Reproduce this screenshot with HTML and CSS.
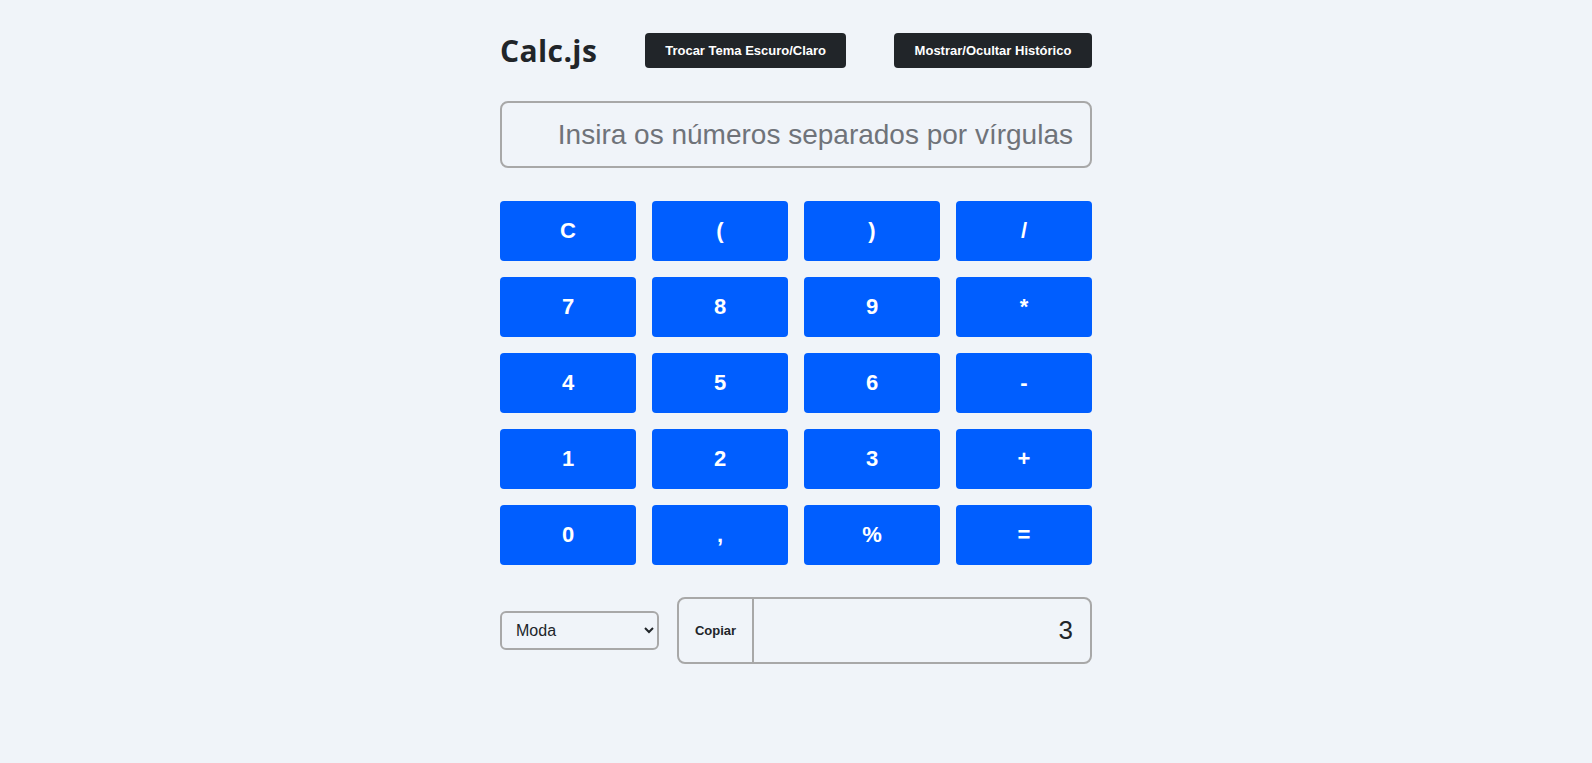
FILE: index.html
```html
<!DOCTYPE html>
<html lang="pt-BR">
<head>
<meta charset="utf-8">
<title>Calc.js</title>
<link rel="stylesheet" href="styles.css">
</head>
<body>
<main class="calc">
  <header class="header">
    <h1 class="title">Calc.js</h1>
    <button class="btn-dark">Trocar Tema Escuro/Claro</button>
    <button class="btn-dark">Mostrar/Ocultar Histórico</button>
  </header>
  <input class="entry" type="text" placeholder="Insira os números separados por vírgulas">
  <div class="keys">
    <button class="key">C</button>
    <button class="key">(</button>
    <button class="key">)</button>
    <button class="key">/</button>
    <button class="key">7</button>
    <button class="key">8</button>
    <button class="key">9</button>
    <button class="key">*</button>
    <button class="key">4</button>
    <button class="key">5</button>
    <button class="key">6</button>
    <button class="key">-</button>
    <button class="key">1</button>
    <button class="key">2</button>
    <button class="key">3</button>
    <button class="key">+</button>
    <button class="key">0</button>
    <button class="key">,</button>
    <button class="key">%</button>
    <button class="key">=</button>
  </div>
  <div class="bottom">
    <select class="mode">
      <option>Moda</option>
      <option>Média</option>
      <option>Mediana</option>
    </select>
    <div class="output">
      <button class="copy">Copiar</button>
      <div class="result">3</div>
    </div>
  </div>
</main>
</body>
</html>
```

FILE: styles.css
```css
* { box-sizing: border-box; }
html, body { margin: 0; padding: 0; }
body {
  background: #f0f4f9;
  font-family: "Liberation Sans", Arial, sans-serif;
  color: #212529;
  min-height: 763px;
}
.calc {
  width: 592px;
  margin: 0 auto;
  padding-top: 33px;
  display: flex;
  flex-direction: column;
  gap: 33px;
}
.header {
  display: flex;
  align-items: center;
  justify-content: space-between;
  height: 35px;
}
.title {
  margin: 0;
  font-family: "Open Sans", "Noto Sans", sans-serif;
  font-weight: 700;
  font-size: 30px;
  letter-spacing: 0.4px;
  color: #212529;
  line-height: 35px;
}
.btn-dark {
  background: #212529;
  color: #fff;
  border: none;
  border-radius: 4px;
  height: 35px;
  padding: 0 16px;
  font-family: "Liberation Sans", Arial, sans-serif;
  font-weight: 700;
  font-size: 13px;
}
.btn-dark:first-of-type { width: 201px; }
.btn-dark:last-of-type { width: 198px; }
.entry {
  height: 67px;
  width: 100%;
  border: 2px solid #a8a8a8;
  border-radius: 8px;
  background: transparent;
  text-align: right;
  padding: 0 17px;
  font-family: "Liberation Sans", Arial, sans-serif;
  font-size: 28px;
  color: #212529;
}
.entry::placeholder { color: #6f7379; }
.keys {
  display: grid;
  grid-template-columns: repeat(4, 1fr);
  gap: 16px;
}
.key {
  height: 60px;
  background: #005eff;
  color: #fff;
  border: none;
  border-radius: 4px;
  font-family: "Liberation Sans", Arial, sans-serif;
  font-weight: 700;
  font-size: 22px;
}
.bottom {
  display: flex;
  align-items: center;
  gap: 18px;
  margin-top: -1px;
}
.mode {
  width: 159px;
  height: 39px;
  border: 2px solid #a8a8a8;
  border-radius: 6px;
  background: #f0f4f9;
  font-family: "Liberation Sans", Arial, sans-serif;
  font-size: 16px;
  color: #212529;
  padding: 0 8px 0 10px;
}
.output {
  flex: 1;
  height: 67px;
  display: flex;
  border: 2px solid #a8a8a8;
  border-radius: 8px;
  overflow: hidden;
}
.copy {
  width: 75px;
  background: transparent;
  border: none;
  border-right: 2px solid #a8a8a8;
  font-family: "Liberation Sans", Arial, sans-serif;
  font-weight: 700;
  font-size: 13px;
  color: #212529;
  padding: 0;
}
.result {
  flex: 1;
  display: flex;
  align-items: center;
  justify-content: flex-end;
  padding-right: 17px;
  font-size: 26px;
  color: #212529;
}
```
